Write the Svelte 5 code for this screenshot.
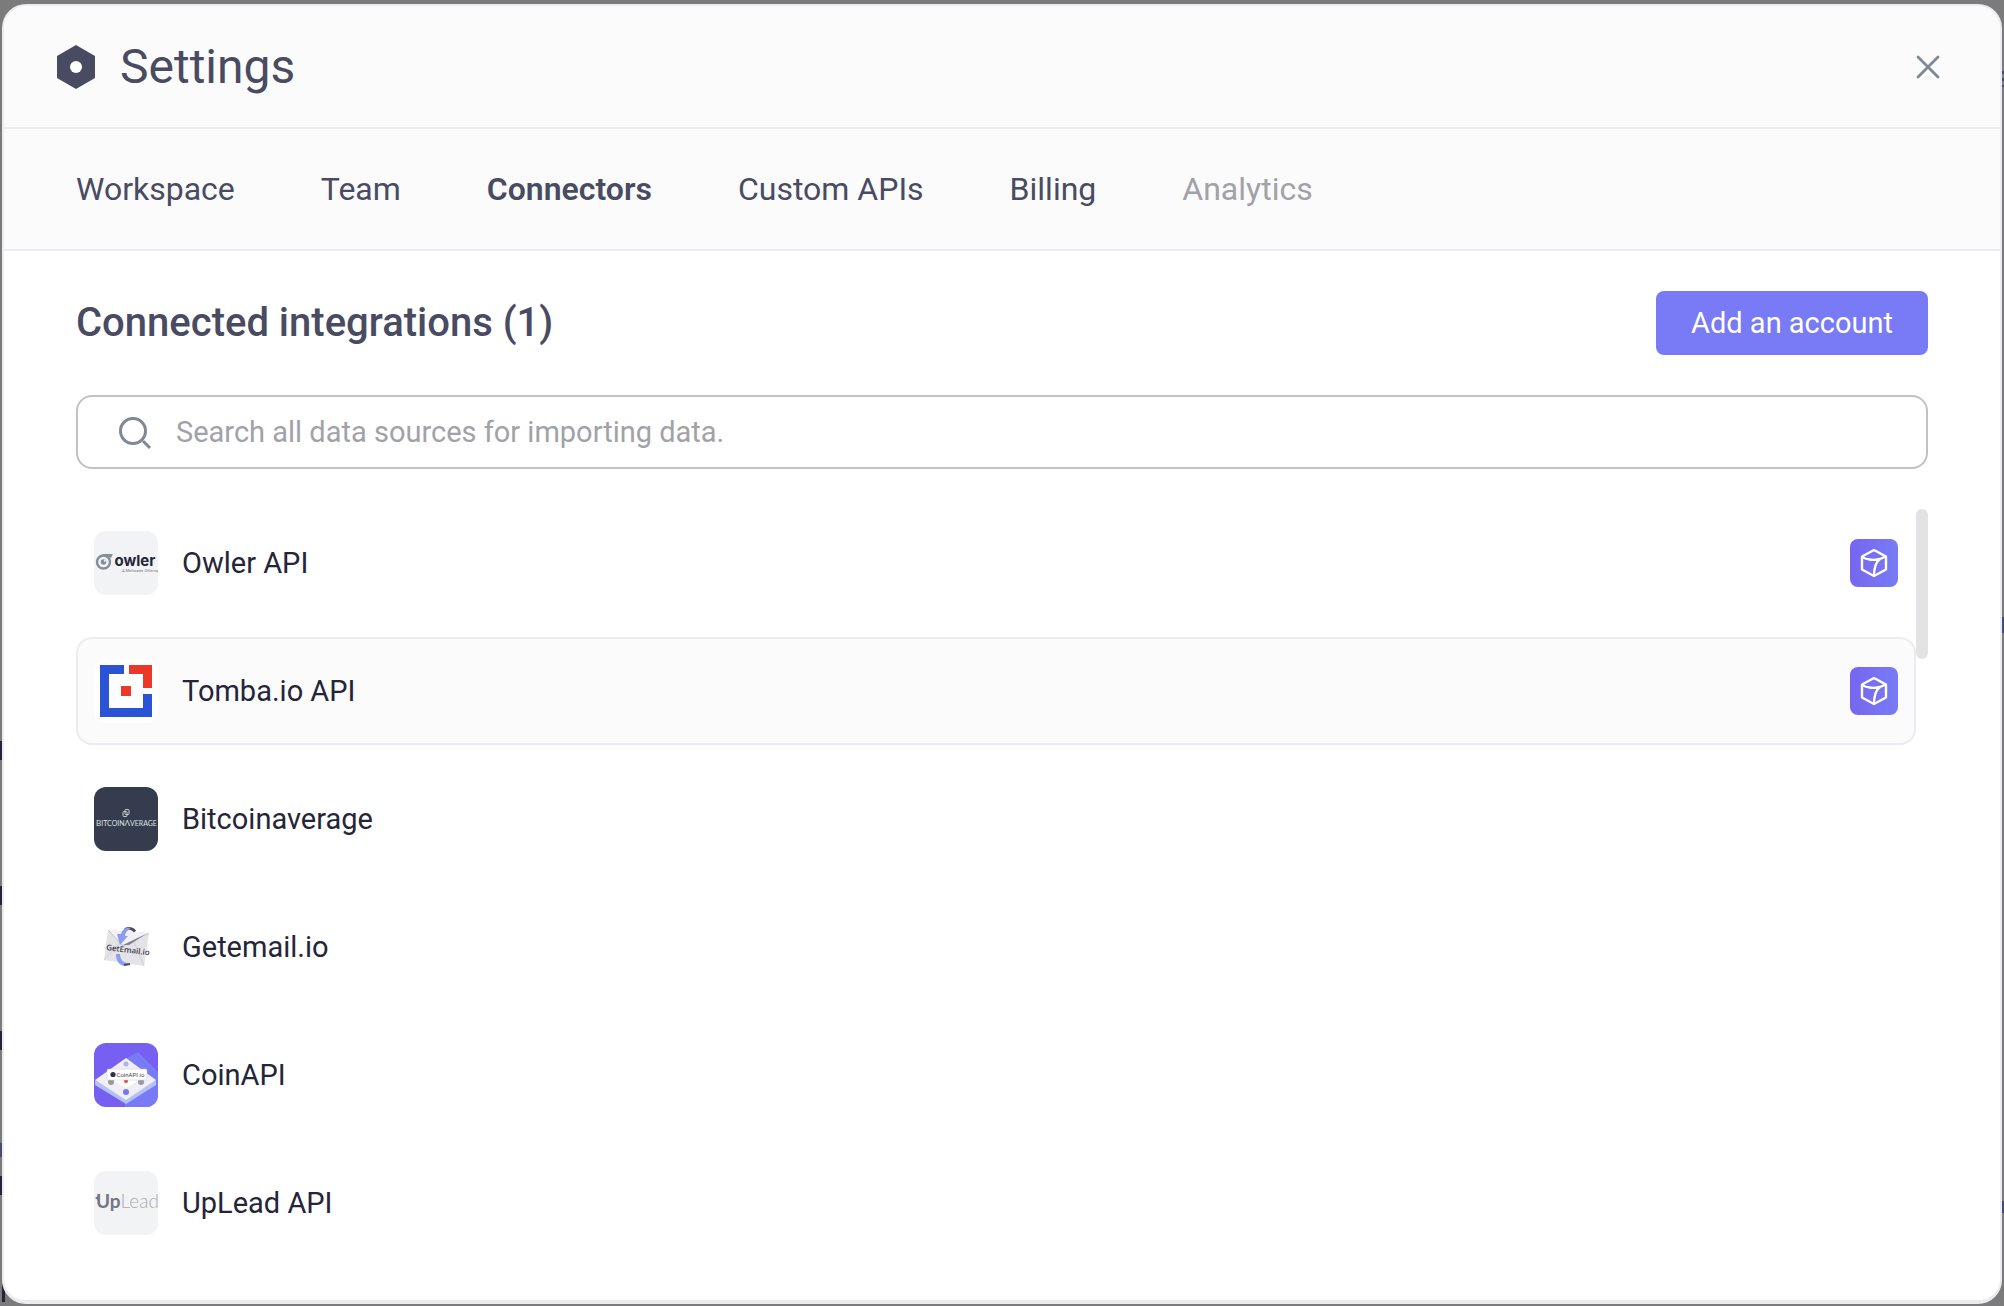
<script>
    import { createEventDispatcher } from 'svelte';

    const dispatch = createEventDispatcher();

    const tabs = [
        { id: 'workspace', label: 'Workspace' },
        { id: 'team', label: 'Team' },
        { id: 'connectors', label: 'Connectors' },
        { id: 'custom-apis', label: 'Custom APIs' },
        { id: 'billing', label: 'Billing' },
        { id: 'analytics', label: 'Analytics', disabled: true }
    ];

    const integrations = [
        { id: 'owler', name: 'Owler API', api: true },
        { id: 'tomba', name: 'Tomba.io API', api: true },
        { id: 'bitcoinaverage', name: 'Bitcoinaverage' },
        { id: 'getemail', name: 'Getemail.io' },
        { id: 'coinapi', name: 'CoinAPI' },
        { id: 'uplead', name: 'UpLead API' }
    ];

    // slivers of the dimmed page that stick out beside the modal
    const slivers = [
        { side: 'left', top: 741, height: 19 },
        { side: 'left', top: 886, height: 19 },
        { side: 'left', top: 1031, height: 19 },
        { side: 'left', top: 1143, height: 14, soft: true },
        { side: 'left', top: 1176, height: 19 },
        { side: 'left', top: 1284, height: 18, wide: true },
        { side: 'right', top: 71, height: 3, soft: true },
        { side: 'right', top: 78, height: 3, soft: true },
        { side: 'right', top: 85, height: 2, soft: true },
        { side: 'right', top: 617, height: 16, soft: true },
        { side: 'right', top: 1201, height: 12, soft: true }
    ];

    let activeTab = 'connectors';
    let highlighted = 'tomba';
    let search = '';

    $: filtered = integrations.filter((item) => item.name.toLowerCase().includes(search.toLowerCase()));

    function close() {
        dispatch('close');
    }
</script>

<div class="backdrop">
    {#each slivers as s}
        <span class="sliver {s.side}" class:soft={s.soft} class:wide={s.wide} style="top: {s.top}px; height: {s.height}px"></span>
    {/each}

    <div class="modal" role="dialog" aria-modal="true" aria-labelledby="settings-title">
        <header class="modal-header">
            <svg class="settings-icon" width="38" height="44" viewBox="0 0 38 44" aria-hidden="true">
                <path d="M19 0 38 11v22L19 44 0 33V11Z" fill="#494b63" />
                <circle cx="19" cy="22" r="6" fill="#fff" />
            </svg>
            <h1 id="settings-title">Settings</h1>
            <button class="close-btn" on:click={close} aria-label="Close settings">
                <svg width="24" height="24" viewBox="0 0 24 24" fill="none" stroke="currentColor" stroke-width="2.8" stroke-linecap="round">
                    <path d="M2 2 22 22M22 2 2 22" />
                </svg>
            </button>
        </header>

        <nav class="tabs" aria-label="Settings sections">
            {#each tabs as tab}
                <button
                    class="tab"
                    class:active={tab.id === activeTab}
                    disabled={tab.disabled}
                    on:click={() => (activeTab = tab.id)}
                >
                    {tab.label}
                </button>
            {/each}
        </nav>

        <main class="content">
            <div class="content-header">
                <h2>Connected integrations (1)</h2>
                <button class="add-btn">Add an account</button>
            </div>

            <label class="search">
                <svg width="34" height="34" viewBox="0 0 34 34" fill="none" stroke="#7f8895" stroke-width="3" aria-hidden="true">
                    <circle cx="15" cy="16" r="12.500" />
                    <path d="m25 26 7 7" />
                </svg>
                <input type="text" bind:value={search} placeholder="Search all data sources for importing data." aria-label="Search all data sources" />
            </label>

            <div class="list-area">
                <ul class="list">
                    {#each filtered as item (item.id)}
                        <li class="row" class:highlighted={item.id === highlighted}>
                            <svg class="logo {item.id}" width="64" height="64" viewBox="0 0 64 64" aria-hidden="true">
                                {#if item.id === 'owler'}
                                    <path d="M8 23h11l-2 4" fill="#878d99" />
                                    <circle cx="9.500" cy="31" r="6.500" fill="none" stroke="#878d99" stroke-width="2.400" />
                                    <circle cx="9.500" cy="31" r="2.800" fill="#878d99" />
                                    <circle cx="10.800" cy="29.800" r="1" fill="#f2f3f5" />
                                    <text x="20.500" y="35" font-size="15" font-weight="700" font-family="Inter" fill="#25253a">owler</text>
                                    <text x="28" y="40.500" font-size="4" fill="#74747f">A Meltwater Offering</text>
                                {:else if item.id === 'tomba'}
                                    <path d="M6 6h24v9H15v34h34V35h9v23H6Z" fill="#2b53d6" />
                                    <path d="M35 6h23v23h-9V15H35Z" fill="#ec3729" />
                                    <path d="M27 27h10v10H27Z" fill="#ec3729" />
                                {:else if item.id === 'bitcoinaverage'}
                                    <g fill="none" stroke="#c8ccd3">
                                        <rect x="31" y="22.500" width="4" height="5" rx="1" />
                                        <rect x="29" y="24.500" width="4" height="5" rx="1" />
                                    </g>
                                    <text x="2" y="39" font-size="8" font-family="Lato" fill="#dfe2e6">B<tspan font-size="7">ITCOIN</tspan>Λ<tspan font-size="7">VERAGE</tspan></text>
                                {:else if item.id === 'getemail'}
                                    <path d="m14 15 41 3-5 33-40-6Z" fill="#e3e3e8" />
                                    <path d="m14 15 15 16 26-13" fill="#f1f1f5" stroke="#c4c4cb" />
                                    <path d="m10 45 15-16M50 51 40 27" stroke="#cfcfd6" />
                                    <path d="m29 30 23-11-17 11Z" fill="#7f7f89" />
                                    <path d="M31 14.500c4-2 8-1 10 2" fill="none" stroke="#4a4a5c" stroke-width="3" />
                                    <path d="M37 13c-6-1-9 2-10 6h-4l3 11 8-9h-3c0-3 2-6 6-8Z" fill="#8b9cf6" />
                                    <path d="M22 39c0 8 4 12 10 12l2-3c-5 0-8-4-8-9Z" fill="#8b9cf6" />
                                    <path d="m30 50 6-1" stroke="#4a4a5c" stroke-width="2" />
                                    <text x="12" y="35" font-size="8" font-family="Noto Sans" font-weight="500" transform="rotate(7 12 35)" fill="#2f2f3d">GetEmail.io</text>
                                {:else if item.id === 'coinapi'}
                                    <path d="M0 0h64v64H0Z" fill="#775ff2" />
                                    <path d="m31 16 13-7 20 20v35H31Z" fill="#787bf5" />
                                    <path d="M1 37v5l31 19 30-19v-5L32 56Z" fill="#b4c0f8" />
                                    <path d="M32 15 62 37 32 57 1 37Z" fill="#efeff4" />
                                    <path d="m32 31 12 7-12 7-12-7Z" fill="#fff" />
                                    <circle cx="32" cy="21" r="2.500" fill="#a9b4f2" />
                                    <circle cx="32" cy="49" r="3" fill="#7577ed" />
                                    <circle cx="17" cy="39" r="3" fill="#9a9aa6" />
                                    <circle cx="47" cy="39" r="3" fill="#9a9aa6" />
                                    <circle cx="32" cy="38" r="2" fill="#e4463f" />
                                    <rect x="13" y="26" width="40" height="11" rx="1.500" fill="#fff" stroke="#c9c9d6" stroke-width=".5" />
                                    <circle cx="19" cy="31.500" r="2.600" fill="#30303f" />
                                    <text x="22.500" y="34" font-size="6" fill="#43434f">CoinAPI.io</text>
                                {:else if item.id === 'uplead'}
                                    <path d="m1 27 3-2v4" fill="#73757f" />
                                    <text x="2" y="37" font-size="19" font-family="Lato" fill="#73757f"><tspan font-weight="700">Up</tspan><tspan fill="#a9abb2" font-weight="300">Lead</tspan></text>
                                {/if}
                            </svg>
                            <span class="name">{item.name}</span>
                            {#if item.api}
                                <span class="badge">
                                    <svg width="30" height="30" viewBox="0 0 30 30" fill="none" stroke="#fff" stroke-width="2.400" stroke-linejoin="round" aria-hidden="true">
                                        <path d="M15 2 27 8.500v13L15 28 3 21.500v-13Z" />
                                        <path d="M3 9c5 3 13 3.500 18 2l6-2.500M21 11c-4 3-6 9-6 17" />
                                    </svg>
                                </span>
                            {/if}
                        </li>
                    {/each}
                </ul>
                <div class="scrollbar"></div>
            </div>
        </main>
    </div>
</div>

<style>
    :global(body) {
        background-color: #7b7b7b;
    }

    .backdrop {
        position: relative;
        min-height: 100vh;
        box-sizing: border-box;
        display: flex;
        padding: 4px 2px 2px;
        font-family: Roboto, sans-serif;
        color: #494b63;
    }

    .sliver {
        position: absolute;
        width: 2px;
        background-color: #25253a;
    }

    .sliver.left {
        left: 0;
    }

    .sliver.right {
        right: 0;
    }

    .sliver.soft {
        background-color: #494b70;
    }

    .sliver.wide {
        left: 2px;
        width: 3px;
    }

    .modal {
        position: relative;
        flex: 1;
        display: flex;
        flex-direction: column;
        overflow: hidden;
        background-color: #fff;
        border: 2px solid #ebebf2;
        border-bottom-width: 4px;
        border-radius: 24px;
    }

    .modal-header {
        display: flex;
        align-items: center;
        gap: 25px;
        height: 121px;
        padding: 0 60px 0 53px;
        background-color: #fbfbfb;
        border-bottom: 2px solid #ebebf2;
    }

    h1,
    h2 {
        margin: 0;
    }

    h1 {
        flex: 1;
        font-size: 48px;
        line-height: 56px;
        font-weight: 400;
    }

    button {
        border: none;
        font-family: inherit;
        cursor: pointer;
    }

    .close-btn {
        display: flex;
        padding: 0;
        background: transparent;
        color: #7f8895;
    }

    .tabs {
        display: flex;
        align-items: center;
        gap: 86px;
        height: 120px;
        padding: 0 72px;
        background-color: #fbfbfb;
        border-bottom: 2px solid #ebebf2;
    }

    .tab {
        padding: 0;
        background: transparent;
        color: inherit;
        font-size: 32px;
        line-height: 40px;
    }

    .tab.active {
        font-weight: 600;
    }

    .tab:disabled {
        color: #a1a2a8;
        cursor: default;
    }

    .content {
        padding: 40px 72px 0;
    }

    .content-header {
        display: flex;
        align-items: center;
        justify-content: space-between;
    }

    h2 {
        font-size: 40px;
        line-height: 48px;
        font-weight: 500;
    }

    .add-btn {
        height: 64px;
        padding: 0 35px;
        background-color: #787bf5;
        border-radius: 8px;
        color: #fff;
        font-size: 29px;
    }

    .search {
        display: flex;
        align-items: center;
        gap: 24px;
        height: 70px;
        margin-top: 40px;
        padding: 0 40px;
        border: 2px solid #c2c2c5;
        border-radius: 16px;
    }

    .search input {
        flex: 1;
        padding: 0;
        border: none;
        outline: none;
        background: transparent;
        color: #25253a;
        font-family: inherit;
        font-size: 29px;
    }

    .search input::placeholder {
        color: #a1a2a8;
    }

    .list-area {
        display: flex;
        align-items: flex-start;
        margin-top: 40px;
    }

    .list {
        flex: 1;
        display: flex;
        flex-direction: column;
        gap: 20px;
        margin: 0;
        padding: 0;
        list-style: none;
    }

    .row {
        display: flex;
        align-items: center;
        gap: 24px;
        height: 104px;
        padding: 0 16px;
        border: 2px solid transparent;
        border-radius: 16px;
    }

    .row.highlighted {
        background-color: #fbfbfb;
        border-color: #ebebf2;
    }

    .logo {
        border-radius: 12px;
        background-color: #fff;
    }

    .logo.owler,
    .logo.uplead {
        background-color: #f2f3f5;
    }

    .logo.bitcoinaverage {
        background-color: #343c4e;
    }

    .name {
        flex: 1;
        color: #25253a;
        font-size: 29px;
        line-height: 36px;
    }

    .badge {
        display: flex;
        align-items: center;
        justify-content: center;
        width: 48px;
        height: 48px;
        border-radius: 8px;
        background: linear-gradient(90deg, #7766f0, #787bf5);
    }

    .scrollbar {
        width: 12px;
        height: 150px;
        border-radius: 6px;
        background-color: #e2e3e5;
    }
</style>
